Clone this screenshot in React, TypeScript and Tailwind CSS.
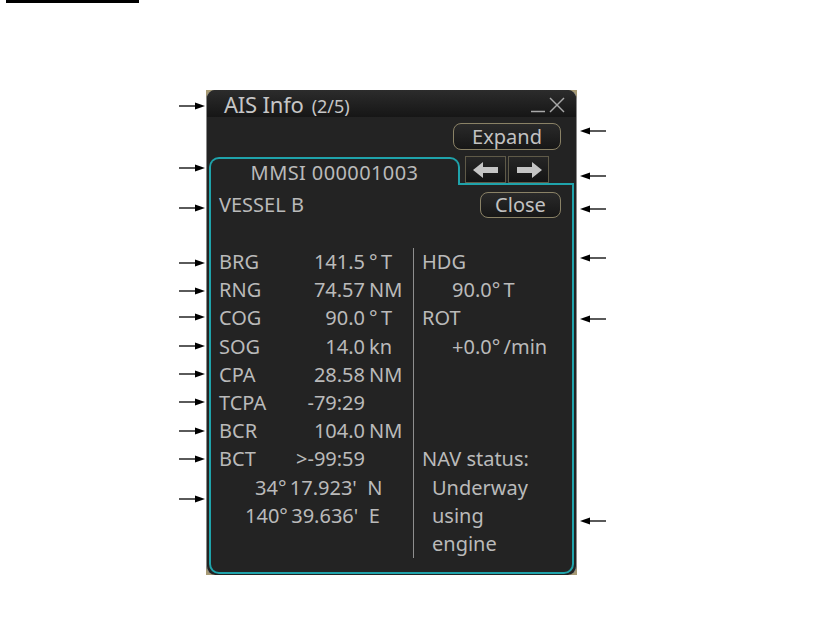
import React from "react";

const leftArrows = [106, 168, 208, 263, 291, 317, 346, 374, 402, 431, 459, 499];
const rightArrows = [131, 176, 209, 258, 319, 521];

const rows: [string, string, string][] = [
  ["BRG", "141.5", "°\u2009T"],
  ["RNG", "74.57", "NM"],
  ["COG", "90.0", "°\u2009T"],
  ["SOG", "14.0", "kn"],
  ["CPA", "28.58", "NM"],
  ["TCPA", "-79:29", ""],
  ["BCR", "104.0", "NM"],
  ["BCT", ">-99:59", ""],
];

const CalloutArrow = ({ dir }: { dir: "left" | "right" }) => (
  <svg width="26" height="10" viewBox="0 0 26 10">
    {dir === "right" ? (
      <>
        <line x1="0" y1="5" x2="18" y2="5" stroke="#000" strokeWidth="1.3" />
        <polygon points="16,1.5 26,5 16,8.5" fill="#000" />
      </>
    ) : (
      <>
        <line x1="8" y1="5" x2="26" y2="5" stroke="#000" strokeWidth="1.3" />
        <polygon points="10,1.5 0,5 10,8.5" fill="#000" />
      </>
    )}
  </svg>
);

const ArrowButton = ({ dir }: { dir: "left" | "right" }) => (
  <button className="w-[41px] h-[27px] flex items-center justify-center bg-gradient-to-b from-[#262626] to-[#141414] border border-[#5f5a48]">
    <svg width="26" height="16" viewBox="0 0 26 16">
      {dir === "left" ? (
        <polygon points="0,8 10,0 10,5 25,5 25,11 10,11 10,16" fill="#c4c4c4" />
      ) : (
        <polygon points="26,8 16,0 16,5 1,5 1,11 16,11 16,16" fill="#c4c4c4" />
      )}
    </svg>
  </button>
);

export default function App() {
  return (
    <div
      className="relative w-[817px] h-[629px] bg-white overflow-hidden"
      style={{ fontFamily: '"Noto Sans", "Open Sans", sans-serif' }}
    >
      <div className="ml-[6px] w-[133px] h-[3px] bg-black" />

      {/* callout arrows */}
      {leftArrows.map((y) => (
        <div key={"l" + y} className="absolute left-[179px]" style={{ top: y - 5 }}>
          <CalloutArrow dir="right" />
        </div>
      ))}
      {rightArrows.map((y) => (
        <div key={"r" + y} className="absolute left-[580px]" style={{ top: y - 5 }}>
          <CalloutArrow dir="left" />
        </div>
      ))}

      {/* window */}
      <div className="mt-[87px] ml-[206px] w-[371px] h-[485px] bg-[#a79a74]">
        <div className="w-full h-full rounded-[9px] bg-[#232323] border-x border-[#8a8a8a] flex flex-col overflow-hidden text-[#bababa]">
          {/* title bar */}
          <div className="h-[27px] shrink-0 flex items-center bg-gradient-to-b from-[#2c2c2c] to-[#161616] pl-[17px] pr-[11px]">
            <div className="flex items-baseline">
              <span className="text-[22px] leading-none text-[#c6c6c6] tracking-[-0.2px]">AIS Info</span>
              <span className="ml-[8px] text-[18px] leading-none text-[#c6c6c6]">(2/5)</span>
            </div>
            <div className="ml-auto flex items-end gap-[4px] pt-[2px]">
              <svg width="14" height="16" viewBox="0 0 14 16">
                <line x1="0" y1="14.5" x2="14" y2="14.5" stroke="#a8a8a8" strokeWidth="1.5" />
              </svg>
              <svg width="16" height="16" viewBox="0 0 16 16">
                <line x1="1" y1="1" x2="15" y2="15" stroke="#a8a8a8" strokeWidth="1.4" />
                <line x1="15" y1="1" x2="1" y2="15" stroke="#a8a8a8" strokeWidth="1.4" />
              </svg>
            </div>
          </div>

          {/* expand */}
          <div className="flex justify-end pr-[15px] mt-[6px]">
            <button className="w-[108px] h-[27px] rounded-[8px] border-[1.5px] border-[#8a8266] bg-gradient-to-b from-[#2a2a2a] to-[#171717] text-[20px] leading-none text-[#c2c2c2]">
              Expand
            </button>
          </div>

          {/* tab row */}
          <div className="flex mt-[7px] mx-[2px] h-[28px]">
            <div className="w-[251px] border-2 border-b-0 border-[#1fa3ab] rounded-t-[10px] flex items-center justify-center pt-[1px] text-[20px] leading-none tracking-[0.4px]">
              MMSI 000001003
            </div>
            <div className="flex-1 border-b-2 border-[#1fa3ab] flex items-start gap-[2px] pl-[5px] -mt-[1px]">
              <ArrowButton dir="left" />
              <ArrowButton dir="right" />
            </div>
          </div>

          {/* panel */}
          <div className="flex-1 mx-[2px] mb-[1px] border-2 border-t-0 border-[#1fa3ab] rounded-b-[10px] flex flex-col pl-[8px] pr-[11px]">
            <div className="flex justify-between items-start mt-[6px] h-[28px]">
              <span className="text-[20px] leading-[28px]">VESSEL B</span>
              <button className="mt-[1px] w-[81px] h-[26px] rounded-[8px] border-[1.5px] border-[#8a8266] bg-gradient-to-b from-[#2a2a2a] to-[#171717] text-[20px] leading-none text-[#c2c2c2]">
                Close
              </button>
            </div>

            <div className="flex mt-[29px] text-[20px] leading-[28.2px]">
              {/* left column */}
              <div className="w-[194px] shrink-0">
                {rows.map(([label, value, unit]) => (
                  <div key={label} className="grid grid-cols-[72px_74px_auto]">
                    <span>{label}</span>
                    <span className="text-right">{value}</span>
                    <span className="pl-[4px]">{unit}</span>
                  </div>
                ))}
                <div className="pl-[36px]">34°&thinsp;17.923'&nbsp; N</div>
                <div className="pl-[26px]">140°&thinsp;39.636'&nbsp; E</div>
              </div>

              {/* right column */}
              <div className="border-l-[1.5px] border-[#8e8e8e] h-[310px] pl-[8px]">
                <div>HDG</div>
                <div className="pl-[30px]">90.0°&thinsp;T</div>
                <div>ROT</div>
                <div className="pl-[30px]">+0.0°&thinsp;/min</div>
                <div className="h-[84.6px]" />
                <div>NAV status:</div>
                <div className="pl-[10px]">Underway</div>
                <div className="pl-[10px]">using</div>
                <div className="pl-[10px]">engine</div>
              </div>
            </div>
          </div>
        </div>
      </div>
    </div>
  );
}
